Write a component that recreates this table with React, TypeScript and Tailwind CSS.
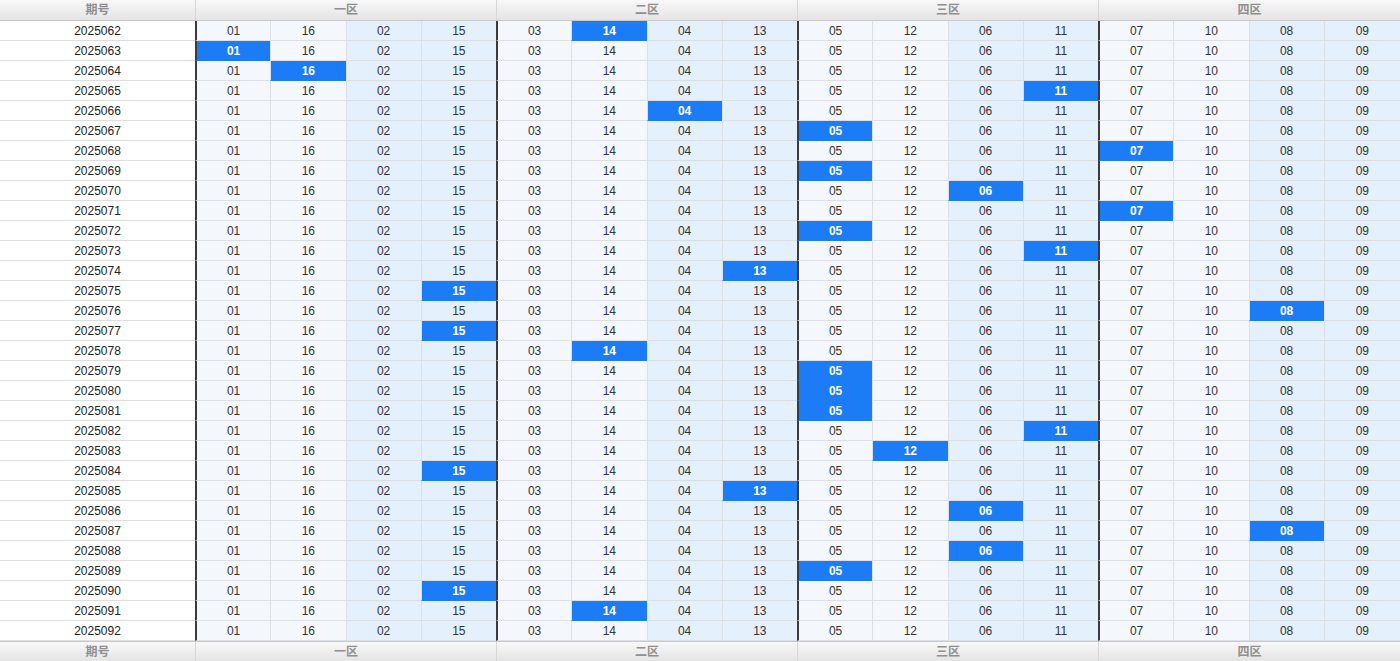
import React from 'react';

const NUMS = ['01', '16', '02', '15', '03', '14', '04', '13', '05', '12', '06', '11', '07', '10', '08', '09'];
const ZONES = ['一区', '二区', '三区', '四区'];

// index of the highlighted column for each period, -1 for none
const HITS = [5, 0, 1, 11, 6, 8, 12, 8, 10, 12, 8, 11, 7, 3, 14, 3, 5, 8, 8, 8, 11, 9, 3, 7, 10, 14, 10, 8, 3, 5, -1];

const GRID = 'grid grid-cols-[195px_repeat(15,75.25px)_minmax(0,1fr)]';

const HeaderRow: React.FC<{ footer?: boolean }> = ({ footer }) => (
  <div
    className={`${GRID} ${footer ? 'h-[20px] border-t border-[#c9c9c9]' : 'h-[21px] border-b border-[#c9c9c9]'} bg-linear-to-b from-[#f8f8f8] to-[#e4e4e4] text-[12px] font-bold text-[#8f8f8f]`}
  >
    <div className="flex items-center justify-center">期号</div>
    {ZONES.map((z) => (
      <div key={z} className="col-span-4 flex items-center justify-center border-l border-[#d6d6d6]">
        {z}
      </div>
    ))}
  </div>
);

const App: React.FC = () => {
  return (
    <div className="w-[1400px] h-[661px] overflow-hidden bg-white font-['Liberation_Sans','Noto_Sans_CJK_SC',sans-serif]">
      <HeaderRow />
      {HITS.map((hit, r) => (
        <div key={r} className={`${GRID} h-[20px] text-[12px] text-[#333]`}>
          <div className="flex items-center justify-center border-b border-[#dedede] bg-white text-[#222]">
            {2025062 + r}
          </div>
          {NUMS.map((n, i) => {
            const zoneStart = i % 4 === 0;
            const blue = i % 4 >= 2;
            const on = hit === i;
            return (
              <div
                key={i}
                className={`flex items-center justify-center border-b ${
                  on ? 'border-[#1b7cf6] bg-[#1b7cf6] font-bold text-white' : blue ? 'border-[#d9dee5] bg-[#e5f0fd]' : 'border-[#dcdfe3] bg-[#f4f8fd]'
                } ${zoneStart ? 'border-l-2 border-l-[#3b3b3b]' : 'border-l border-l-[#dcdfe3]'}`}
              >
                {n}
              </div>
            );
          })}
        </div>
      ))}
      <HeaderRow footer />
    </div>
  );
};

export default App;
